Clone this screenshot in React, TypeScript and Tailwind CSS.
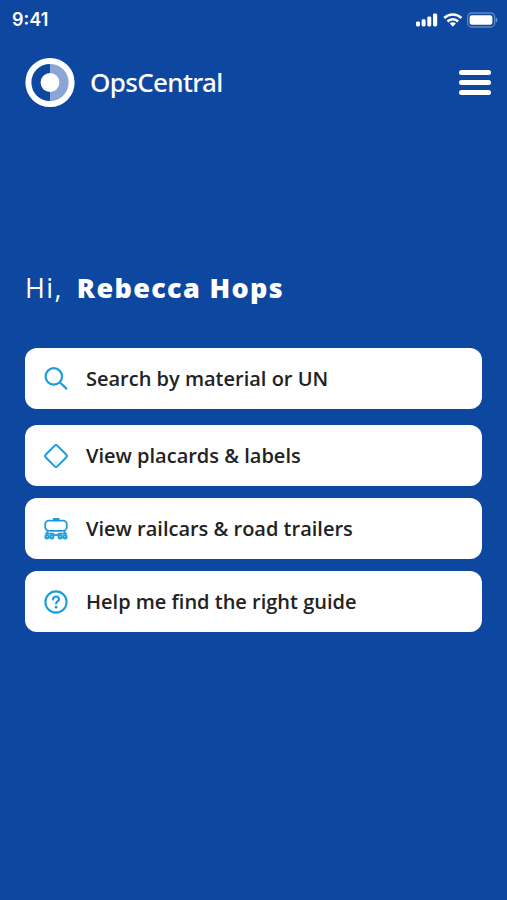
import type { ReactNode } from 'react'

type MenuItem = {
  label: string
  icon: ReactNode
  className?: string
}

function SearchIcon() {
  return (
    <svg viewBox="0 0 24 24" className="size-6" fill="none" stroke="currentColor" strokeWidth="2.2" strokeLinecap="round">
      <circle cx="9.8" cy="9.4" r="8.2" />
      <path d="M15.8 15.2l6.6 6.4" />
    </svg>
  )
}

function PlacardIcon() {
  return (
    <svg viewBox="0 0 24 24" className="size-6" fill="none" stroke="currentColor" strokeWidth="2" strokeLinejoin="round">
      <path d="M10.7 1.6a1.8 1.8 0 0 1 2.6 0l9.1 9.1a1.8 1.8 0 0 1 0 2.6l-9.1 9.1a1.8 1.8 0 0 1-2.6 0l-9.1-9.1a1.8 1.8 0 0 1 0-2.6z" />
      <circle cx="12" cy="18.3" r="0.6" fill="currentColor" stroke="none" />
    </svg>
  )
}

function RailcarIcon() {
  return (
    <svg viewBox="0 0 24 24" className="size-6" fill="none" stroke="currentColor" strokeWidth="1.8" strokeLinecap="round">
      <rect x="1.2" y="3.6" width="21.6" height="10.2" rx="3.8" />
      <path d="M9.8 3.2V2h4.8v1.2" fill="currentColor" />
      <path d="M3.4 14v2.4M20.6 14v2.4" />
      <path d="M1.8 16.6h7.4M14.8 16.6h7.4M9.2 16.8l1.8 1.4h2l1.8-1.4" />
      <circle cx="3" cy="19.8" r="1.6" strokeWidth="2" />
      <circle cx="7.8" cy="19.8" r="1.6" strokeWidth="2" />
      <circle cx="16.2" cy="19.8" r="1.6" strokeWidth="2" />
      <circle cx="21" cy="19.8" r="1.6" strokeWidth="2" />
    </svg>
  )
}

function HelpIcon() {
  return (
    <svg viewBox="0 0 24 24" className="size-6" fill="none" stroke="currentColor" strokeWidth="2.1" strokeLinecap="round" strokeLinejoin="round">
      <circle cx="12" cy="12" r="10.6" />
      <path d="M9.1 9.4a2.9 2.9 0 0 1 5.8 0c0 1.9-2.8 2.1-2.8 4.1" strokeWidth="2.2" />
      <circle cx="12.1" cy="17.2" r="1.4" fill="currentColor" stroke="none" />
    </svg>
  )
}

const MENU: MenuItem[] = [
  { label: 'Search by material or UN', icon: <SearchIcon />, className: 'mb-1' },
  { label: 'View placards & labels', icon: <PlacardIcon /> },
  { label: 'View railcars & road trailers', icon: <RailcarIcon /> },
  { label: 'Help me find the right guide', icon: <HelpIcon /> },
]

function StatusBar() {
  return (
    <div className="flex h-10 items-center justify-between pl-3 pr-2">
      <span className="font-['Inter',sans-serif] text-lg font-semibold">9:41</span>
      <div className="flex items-center gap-1">
        <svg viewBox="0 0 23 14" className="h-[14px] w-[23px]" fill="currentColor" aria-hidden="true">
          <rect x="0" y="8.5" width="4" height="5" rx="1.4" />
          <rect x="5.6" y="6.3" width="4" height="7.2" rx="1.4" />
          <rect x="11.3" y="3.5" width="4" height="10" rx="1.4" />
          <rect x="17" y="0.5" width="4.2" height="13" rx="1.4" />
        </svg>
        <svg viewBox="0 0 20 14" className="h-[14px] w-5" fill="none" stroke="currentColor" strokeWidth="2.6" aria-hidden="true">
          <path d="M1.2 5a12.4 12.4 0 0 1 17.2 0" />
          <path d="M4.5 8.5a7.4 7.4 0 0 1 10.6 0" />
          <path d="M6.7 10.6a4.4 4.4 0 0 1 6.2 0l-3.1 3.1z" fill="currentColor" stroke="none" />
        </svg>
        <svg viewBox="0 0 32 16" className="h-4 w-8" aria-hidden="true">
          <rect x="0.7" y="1" width="27" height="14" rx="4" fill="none" stroke="currentColor" strokeWidth="1.3" strokeOpacity="0.35" />
          <rect x="2.6" y="3.2" width="22.8" height="9.6" rx="2.3" fill="currentColor" />
          <path d="M28.8 5.6v4.6c1-.4 1.6-1.2 1.6-2.3s-.6-1.9-1.6-2.3z" fill="currentColor" fillOpacity="0.4" />
        </svg>
      </div>
    </div>
  )
}

function Header() {
  return (
    <header className="flex items-center justify-between pl-6 pr-4 pt-4">
      <a href="#" className="flex items-center gap-[14px]">
        <svg viewBox="0 0 52 52" className="size-[52px]" aria-hidden="true">
          <path d="M26 6a20 20 0 0 1 0 40z" fill="#8ba6d4" />
          <circle cx="26" cy="26.5" r="21.6" fill="none" stroke="white" strokeWidth="6" />
          <circle cx="26" cy="26.5" r="9.4" fill="white" />
        </svg>
        <span className="font-['Noto_Sans','Open_Sans',sans-serif] text-[26px] font-medium leading-8 tracking-tight">OpsCentral</span>
      </a>
      <button type="button" aria-label="Menu" className="flex flex-col gap-[5px] pt-px">
        <span className="h-[5px] w-8 rounded-full bg-white" />
        <span className="h-[5px] w-8 rounded-full bg-white" />
        <span className="h-[5px] w-8 rounded-full bg-white" />
      </button>
    </header>
  )
}

export default function App() {
  return (
    <div className="min-h-screen bg-[#0e479f] font-['Open_Sans',sans-serif] text-white">
      <StatusBar />
      <Header />

      <main className="px-[25px] pt-40">
        <h1 className="flex gap-[14px] text-[27px] leading-10 tracking-wider">
          <span className="font-normal">Hi,</span>
          <span className="font-extrabold">Rebecca Hops</span>
        </h1>

        <nav className="mt-10 flex flex-col gap-3">
          {MENU.map((item) => (
            <button
              key={item.label}
              type="button"
              className={`flex h-[61px] items-center gap-[18px] rounded-xl bg-white px-[19px] text-left ${item.className ?? ''}`}
            >
              <span className="text-[#1a9edb]">{item.icon}</span>
              <span className="text-xl font-semibold text-[#222222]">{item.label}</span>
            </button>
          ))}
        </nav>
      </main>
    </div>
  )
}
